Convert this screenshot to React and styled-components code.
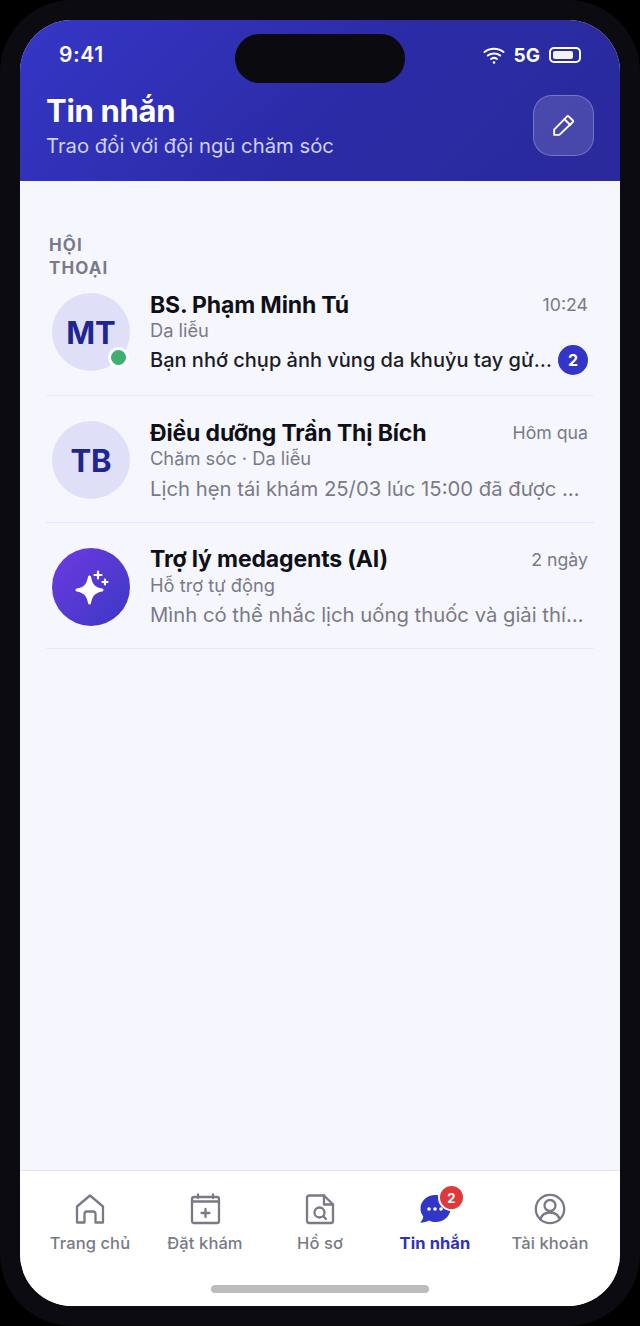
import styled, { createGlobalStyle } from "styled-components";

const GlobalStyle = createGlobalStyle`
  html, body {
    margin: 0;
    padding: 0;
    background: #000;
  }
  * {
    box-sizing: border-box;
  }
`;

const Phone = styled.div`
  position: relative;
  width: 640px;
  height: 1326px;
  padding: 20px;
  background: #0b0b11;
  border-radius: 72px;
  font-family: Inter, "Noto Sans", sans-serif;
`;

const Screen = styled.div`
  width: 600px;
  height: 1286px;
  display: flex;
  flex-direction: column;
  overflow: hidden;
  border-radius: 52px;
  background: #f5f6fe;
`;

const Island = styled.div`
  position: absolute;
  left: 235px;
  top: 34px;
  width: 170px;
  height: 49px;
  border-radius: 25px;
  background: #0a0a0f;
`;

const Header = styled.header`
  height: 161px;
  flex-shrink: 0;
  padding: 22px 26px 0 26px;
  background: linear-gradient(135deg, #3536c6 0%, #2b2ba6 55%, #2a2a9c 100%);
`;

const StatusBar = styled.div`
  display: flex;
  align-items: center;
  justify-content: space-between;
  height: 26px;
  padding: 0 13px 0 13px;
  color: #fff;
`;

const Clock = styled.span`
  font-size: 21px;
  line-height: 26px;
  font-weight: 600;
  letter-spacing: 0.6px;
`;

const StatusIcons = styled.div`
  display: flex;
  align-items: center;
  gap: 9px;
`;

const Network = styled.span`
  font-size: 19px;
  font-weight: 700;
`;

const Battery = styled.span`
  display: flex;
  width: 32px;
  height: 16px;
  padding: 2px;
  border: 2px solid #fff;
  border-radius: 5px;
  &::before {
    content: "";
    width: 20px;
    background: #f2f2fa;
    border-radius: 2px;
  }
`;

const HeaderRow = styled.div`
  display: flex;
  align-items: flex-start;
  justify-content: space-between;
  margin-top: 22px;
`;

const Title = styled.h1`
  margin: 0;
  color: #fff;
  font-size: 31px;
  line-height: 42px;
  font-weight: 700;
  letter-spacing: -0.3px;
`;

const Subtitle = styled.p`
  margin: 0;
  color: #cfd1f3;
  font-size: 20.3px;
  line-height: 28px;
`;

const EditButton = styled.button`
  display: flex;
  align-items: center;
  justify-content: center;
  width: 61px;
  height: 61px;
  margin-top: 5px;
  padding: 0;
  background: rgba(255, 255, 255, 0.14);
  border: 1.5px solid rgba(255, 255, 255, 0.26);
  border-radius: 19px;
`;

const Content = styled.main`
  flex: 1;
  padding: 53px 26px 0 26px;
`;

const SectionLabel = styled.div`
  width: 90px;
  padding-left: 3px;
  color: #7a7b86;
  font-size: 17px;
  line-height: 23px;
  font-weight: 700;
  letter-spacing: 1.1px;
`;

const Row = styled.div`
  display: flex;
  align-items: flex-start;
  gap: 20px;
  padding: ${(p) => (p.$first ? "0" : "25px")} 6px 0;
  border-bottom: 1.5px solid #e9eaf4;
  height: ${(p) => (p.$first ? "103px" : "126.5px")};
  margin-top: ${(p) => (p.$first ? "13px" : "0")};
`;

const Avatar = styled.div`
  position: relative;
  display: flex;
  align-items: center;
  justify-content: center;
  flex-shrink: 0;
  width: 78px;
  height: 78px;
  border-radius: 50%;
  background: ${(p) =>
    p.$ai ? "linear-gradient(135deg, #6f3be2 0%, #3a37c3 100%)" : "#dfe0f8"};
  color: #202590;
  font-size: 31px;
  font-weight: 700;
`;

const OnlineDot = styled.span`
  position: absolute;
  right: 1px;
  bottom: 3px;
  width: 21px;
  height: 21px;
  border: 3px solid #fff;
  border-radius: 50%;
  background: #3fb072;
`;

const RowBody = styled.div`
  flex: 1;
  min-width: 0;
`;

const TopLine = styled.div`
  display: flex;
  align-items: center;
  justify-content: space-between;
  height: 23px;
`;

const Name = styled.span`
  color: #0f1016;
  font-size: 23px;
  font-weight: 700;
  letter-spacing: -0.15px;
`;

const Time = styled.span`
  color: #797a85;
  font-size: 17.7px;
`;

const Role = styled.div`
  margin-top: 2px;
  color: #7a7b86;
  font-size: 18.3px;
  line-height: 24px;
`;

const PreviewLine = styled.div`
  display: flex;
  align-items: center;
  gap: 5px;
  height: 32px;
  margin-top: 2px;
`;

const Preview = styled.span`
  flex: 1;
  min-width: 0;
  overflow: hidden;
  white-space: nowrap;
  text-overflow: ellipsis;
  color: ${(p) => (p.$unread ? "#1c1d25" : "#7a7b86")};
  font-size: ${(p) => (p.$unread ? "20px" : "20.3px")};
  font-weight: ${(p) => (p.$unread ? 550 : 400)};
`;

const CountBadge = styled.span`
  display: flex;
  align-items: center;
  justify-content: center;
  flex-shrink: 0;
  width: 30px;
  height: 30px;
  border-radius: 50%;
  background: #3335c8;
  color: #fff;
  font-size: 16px;
  font-weight: 700;
`;

const BottomNav = styled.nav`
  position: relative;
  height: 136px;
  flex-shrink: 0;
  display: flex;
  align-items: flex-start;
  padding: 22px 12.5px 0;
  background: #fff;
  border-top: 1.5px solid #e3e4f1;
`;

const NavItem = styled.div`
  width: 115px;
  display: flex;
  flex-direction: column;
  align-items: center;
  gap: 7px;
  color: ${(p) => (p.$active ? "#2f32b8" : "#797a85")};
  font-size: 16.5px;
  line-height: 22px;
  letter-spacing: 0.1px;
  font-weight: ${(p) => (p.$active ? 700 : 500)};
`;

const NavIcon = styled.div`
  position: relative;
  width: 32px;
  height: 32px;
`;

const NavBadge = styled.span`
  position: absolute;
  left: 19px;
  top: -9px;
  display: flex;
  align-items: center;
  justify-content: center;
  width: 27px;
  height: 27px;
  border: 2.5px solid #fff;
  border-radius: 50%;
  background: #de3a3c;
  color: #fff;
  font-size: 13px;
  font-weight: 700;
`;

const HomeBar = styled.div`
  position: absolute;
  left: 191px;
  bottom: 13px;
  width: 218px;
  height: 8px;
  border-radius: 4px;
  background: #bcbcbe;
`;

const Glyph = ({ children, size = 32, color = "#797a85", width = 2.3 }) => (
  <svg
    width={size}
    height={size}
    viewBox="0 0 32 32"
    fill="none"
    stroke={color}
    strokeWidth={width}
    strokeLinecap="round"
    strokeLinejoin="round"
  >
    {children}
  </svg>
);

const HomeIcon = () => (
  <Glyph>
    <path d="M3 29.5V13.5L16 2.5L29 13.5V29.5H21.5V21a2.5 2.5 0 0 0-2.5-2.5h-6a2.5 2.5 0 0 0-2.5 2.5v8.5Z" />
  </Glyph>
);

const CalendarIcon = () => (
  <Glyph>
    <rect x="3" y="4" width="27" height="26" rx="2" />
    <path d="M3 8.5H30M9 1.5V5M24 1.5V5M12.5 20H20.5M16.5 16V24" />
  </Glyph>
);

const DocIcon = () => (
  <Glyph>
    <path d="M5 2.5H20L29 11.5V28a2 2 0 0 1-2 2H5a2 2 0 0 1-2-2V4.5a2 2 0 0 1 2-2Z" />
    <path d="M20 2.5V11.5H29" />
    <circle cx="15.5" cy="19.5" r="5" />
    <path d="M19.2 23.2L22 26" />
  </Glyph>
);

const ChatIcon = () => (
  <svg width="32" height="32" viewBox="0 0 32 32">
    <path
      d="M16.5 2C8 2 1.500 8 1.500 15.500C1.500 18.500 2.500 21.200 4.300 23.400C4 25.600 2.800 27.800 1 29.600C4.600 29.600 8 28.600 10.400 27.400C12.300 28.400 14.300 29 16.500 29C25 29 31.500 23 31.500 15.500C31.500 8 25 2 16.500 2Z"
      fill="#3236c6"
    />
    <circle cx="10" cy="16" r="1.800" fill="#fff" />
    <circle cx="16" cy="16" r="1.800" fill="#fff" />
    <circle cx="22" cy="16" r="1.800" fill="#fff" />
  </svg>
);

const ProfileIcon = () => (
  <Glyph>
    <circle cx="16" cy="16" r="14.2" />
    <circle cx="16" cy="12.500" r="5.500" />
    <path d="M6.500 26.500C7.500 22 11 19.500 16 19.500C21 19.500 24.500 22 25.500 26.500" />
  </Glyph>
);

const conversations = [
  {
    initials: "MT",
    online: true,
    name: "BS. Phạm Minh Tú",
    time: "10:24",
    role: "Da liễu",
    preview: "Bạn nhớ chụp ảnh vùng da khuỷu tay gửi cho bác sĩ nhé",
    unread: 2,
  },
  {
    initials: "TB",
    name: "Điều dưỡng Trần Thị Bích",
    time: "Hôm qua",
    role: "Chăm sóc · Da liễu",
    preview: "Lịch hẹn tái khám 25/03 lúc 15:00 đã được xác nhận",
  },
  {
    ai: true,
    name: "Trợ lý medagents (AI)",
    time: "2 ngày",
    role: "Hỗ trợ tự động",
    preview: "Mình có thể nhắc lịch uống thuốc và giải thích đơn thuốc",
  },
];

const navItems = [
  { label: "Trang chủ", icon: <HomeIcon /> },
  { label: "Đặt khám", icon: <CalendarIcon /> },
  { label: "Hồ sơ", icon: <DocIcon /> },
  { label: "Tin nhắn", icon: <ChatIcon />, active: true, badge: 2 },
  { label: "Tài khoản", icon: <ProfileIcon /> },
];

export default function App() {
  return (
    <>
      <GlobalStyle />
      <Phone>
        <Island />
        <Screen>
          <Header>
            <StatusBar>
              <Clock>9:41</Clock>
              <StatusIcons>
                <svg width="22" height="20" viewBox="0 0 22 20" fill="none" stroke="#fff" strokeWidth="2" strokeLinecap="round">
                  <path d="M1.500 7C6.500 2.500 15.500 2.500 20.500 7" />
                  <path d="M4.800 10.500C8 7.700 14 7.700 17.200 10.500" />
                  <path d="M8 14C9.700 12.700 12.300 12.700 14 14" />
                  <circle cx="11" cy="17.500" r="1.300" fill="#fff" stroke="none" />
                </svg>
                <Network>5G</Network>
                <Battery />
              </StatusIcons>
            </StatusBar>
            <HeaderRow>
              <div>
                <Title>Tin nhắn</Title>
                <Subtitle>Trao đổi với đội ngũ chăm sóc</Subtitle>
              </div>
              <EditButton>
                <svg width="25" height="25" viewBox="0 0 24 24" fill="none" stroke="#fff" strokeWidth="1.800" strokeLinejoin="round" strokeLinecap="round">
                  <path d="M3 21V16L15.500 3.200a1 1 0 0 1 1.400 0L21 7.200a1 1 0 0 1 0 1.400L8 21Z" />
                  <path d="M13 6L18.500 11.500" />
                </svg>
              </EditButton>
            </HeaderRow>
          </Header>

          <Content>
            <SectionLabel>HỘI THOẠI</SectionLabel>
            {conversations.map((c, i) => (
              <Row key={c.name} $first={i === 0}>
                <Avatar $ai={c.ai}>
                  {c.ai ? (
                    <svg width="40" height="40" viewBox="0 0 40 40" fill="#fff">
                      <path d="M18.500 10C20 18 23 21.500 31 23C23 24.500 20 28 18.500 36C17 28 14 24.500 6 23C14 21.500 17 18 18.500 10Z" stroke="#fff" strokeWidth="3" strokeLinejoin="round" />
                      <path d="M27 4.500V11.500M23.500 8H30.500M34 12.500V17.500M31.500 15H36.500" stroke="#fff" strokeWidth="2.200" strokeLinecap="round" />
                    </svg>
                  ) : (
                    c.initials
                  )}
                  {c.online && <OnlineDot />}
                </Avatar>
                <RowBody>
                  <TopLine>
                    <Name>{c.name}</Name>
                    <Time>{c.time}</Time>
                  </TopLine>
                  <Role>{c.role}</Role>
                  <PreviewLine>
                    <Preview $unread={!!c.unread}>{c.preview}</Preview>
                    {c.unread && <CountBadge>{c.unread}</CountBadge>}
                  </PreviewLine>
                </RowBody>
              </Row>
            ))}
          </Content>

          <BottomNav>
            {navItems.map((item) => (
              <NavItem key={item.label} $active={item.active}>
                <NavIcon>
                  {item.icon}
                  {item.badge && <NavBadge>{item.badge}</NavBadge>}
                </NavIcon>
                {item.label}
              </NavItem>
            ))}
            <HomeBar />
          </BottomNav>
        </Screen>
      </Phone>
    </>
  );
}
